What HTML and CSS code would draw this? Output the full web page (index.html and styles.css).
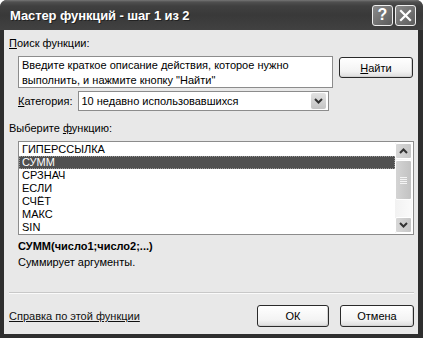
FILE: index.html
```html
<!DOCTYPE html>
<html lang="ru">
<head>
    <meta charset="UTF-8">
    <title>Мастер функций - шаг 1 из 2</title>
    <link rel="stylesheet" href="styles.css">
</head>
<body>
    <div class="window">
        <div class="titlebar">
            <div class="title">Мастер функций - шаг 1 из 2</div>
            <div class="caption-btn help">?</div>
            <div class="caption-btn close">
                <svg width="13" height="13" viewBox="0 0 13 13">
                    <path d="M2 2 L11 11 M11 2 L2 11" stroke="#fff" stroke-width="2.2" stroke-linecap="square"/>
                </svg>
            </div>
        </div>
        <div class="client">
            <div class="label top-label"><u>П</u>оиск функции:</div>
            <div class="search-row">
                <div class="search-box">Введите краткое описание действия, которое нужно выполнить, и нажмите кнопку "Найти"</div>
                <button class="btn find-btn"><u>Н</u>айти</button>
            </div>
            <div class="category-row">
                <div class="label"><u>К</u>атегория:</div>
                <div class="combo">
                    <span class="combo-text">10 недавно использовавшихся</span>
                    <span class="combo-arrow">
                        <svg width="9" height="6" viewBox="0 0 9 6"><path d="M1 1 L4.5 4.5 L8 1" fill="none" stroke="#333" stroke-width="2"/></svg>
                    </span>
                </div>
            </div>
            <div class="label list-label">Выберите <u>ф</u>ункцию:</div>
            <div class="listbox">
                <div class="items">
                    <div class="item">ГИПЕРССЫЛКА</div>
                    <div class="item selected">СУММ</div>
                    <div class="item">СРЗНАЧ</div>
                    <div class="item">ЕСЛИ</div>
                    <div class="item">СЧЁТ</div>
                    <div class="item">МАКС</div>
                    <div class="item">SIN</div>
                </div>
                <div class="scrollbar">
                    <div class="sb-btn">
                        <svg width="9" height="6" viewBox="0 0 9 6"><path d="M1 5 L4.5 1.5 L8 5" fill="none" stroke="#333" stroke-width="2"/></svg>
                    </div>
                    <div class="sb-thumb">
                        <span class="grip"></span>
                    </div>
                    <div class="sb-track"></div>
                    <div class="sb-btn">
                        <svg width="9" height="6" viewBox="0 0 9 6"><path d="M1 1 L4.5 4.5 L8 1" fill="none" stroke="#333" stroke-width="2"/></svg>
                    </div>
                </div>
            </div>
            <div class="syntax">СУММ(число1;число2;...)</div>
            <div class="description">Суммирует аргументы.</div>
            <div class="separator"></div>
            <div class="bottom-row">
                <a class="help-link" href="#">Справка по этой функции</a>
                <button class="btn ok-btn">ОК</button>
                <button class="btn cancel-btn">Отмена</button>
            </div>
        </div>
    </div>
</body>
</html>
```

FILE: styles.css
```css
* {
    box-sizing: border-box;
}
body {
    margin: 0;
    background: #fff;
    font-family: 'Liberation Sans', Arial, sans-serif;
    font-size: 11px;
    color: #000;
}
.window {
    width: 423px;
    height: 338px;
    background: #2e2e2e;
    border-radius: 7px 7px 0 0;
    display: flex;
    flex-direction: column;
}
.titlebar {
    height: 30px;
    display: flex;
    align-items: center;
    padding: 0 7px 0 10px;
    border-radius: 7px 7px 0 0;
    background: linear-gradient(#767676 0, #505050 2px, #404040 6px, #393939 50%, #414141 100%);
}
.title {
    flex: 1;
    color: #fff;
    font-weight: bold;
    font-size: 13px;
    text-shadow: 1px 1px 0 #222;
    letter-spacing: -0.1px;
}
.caption-btn {
    width: 21px;
    height: 21px;
    border: 1px solid #eee;
    border-radius: 3px;
    background: linear-gradient(135deg, #8a8a8a, #5c5c5c);
    display: flex;
    align-items: center;
    justify-content: center;
    color: #fff;
    font-weight: bold;
    font-size: 16px;
    margin-left: 2px;
}
.client {
    flex: 1;
    margin: 0 5px 4px 4px;
    background: #e8e8e8;
    padding: 0 4px 0 5px;
    display: flex;
    flex-direction: column;
}
.label {
    line-height: 13px;
}
.top-label {
    margin-top: 7px;
}
.search-row {
    display: flex;
    align-items: flex-start;
    margin-top: 6px;
    padding-left: 9px;
}
.search-box {
    width: 315px;
    height: 32px;
    padding: 1px 3px;
    background: #fff;
    border: 1px solid #8c8c8c;
    line-height: 15px;
}
.btn {
    font-family: 'Liberation Sans', Arial, sans-serif;
    font-size: 11px;
    color: #000;
    width: 74px;
    height: 22px;
    padding: 0;
    border: 1px solid #2a2a2a;
    border-radius: 3px;
    background: linear-gradient(#fff, #f3f3f3 70%, #dcdcdc);
    box-shadow: inset -1px -1px 0 #d2d2d2;
}
.find-btn {
    height: 21px;
    margin: 1px 0 0 6px;
}
.category-row {
    display: flex;
    align-items: center;
    margin-top: 3px;
    padding-left: 9px;
}
.combo {
    margin-left: 5px;
    width: 251px;
    height: 20px;
    background: #fff;
    border: 1px solid #8c8c8c;
    display: flex;
    align-items: center;
}
.combo-text {
    flex: 1;
    padding-left: 3px;
}
.combo-arrow {
    width: 15px;
    height: 16px;
    margin-right: 2px;
    background: linear-gradient(#e2e2e2, #c4c4c4);
    border-radius: 2px;
    display: flex;
    align-items: center;
    justify-content: center;
}
.list-label {
    margin-top: 11px;
}
.listbox {
    margin: 6px 0 0 9px;
    height: 94px;
    background: #fff;
    border: 1px solid #8c8c8c;
    display: flex;
}
.items {
    flex: 1;
    padding-top: 1px;
}
.item {
    height: 13px;
    line-height: 13px;
    padding-left: 3px;
}
.item.selected {
    background: #505050;
    color: #fff;
    outline: 1px dotted #999;
    outline-offset: -1px;
}
.scrollbar {
    width: 17px;
    margin: 1px 1px 1px 0;
    display: flex;
    flex-direction: column;
    background: linear-gradient(90deg, #f2f2f2, #fafafa);
}
.sb-btn {
    height: 16px;
    border: 1px solid #fff;
    border-radius: 2px;
    background: linear-gradient(90deg, #d8d8d8, #c6c6c6);
    display: flex;
    align-items: center;
    justify-content: center;
}
.sb-thumb {
    height: 40px;
    margin-top: 1px;
    border: 1px solid #fff;
    border-radius: 2px;
    background: linear-gradient(90deg, #d4d4d4, #c2c2c2);
    display: flex;
    align-items: center;
    justify-content: center;
}
.grip {
    width: 7px;
    height: 7px;
    background: repeating-linear-gradient(#f4f4f4 0 1px, transparent 1px 2px);
}
.sb-track {
    flex: 1;
}
.syntax {
    margin: 5px 0 0 9px;
    font-weight: bold;
    line-height: 13px;
}
.description {
    margin: 3px 0 0 9px;
    line-height: 13px;
}
.separator {
    margin-top: 23px;
    height: 2px;
    border-top: 1px solid #c8c8c8;
    border-bottom: 1px solid #fafafa;
}
.bottom-row {
    margin-top: 11px;
    display: flex;
    align-items: center;
}
.help-link {
    flex: 1;
    color: #111;
    text-decoration: underline;
}
.ok-btn {
    width: 72px;
}
.cancel-btn {
    margin-left: 11px;
}
```
